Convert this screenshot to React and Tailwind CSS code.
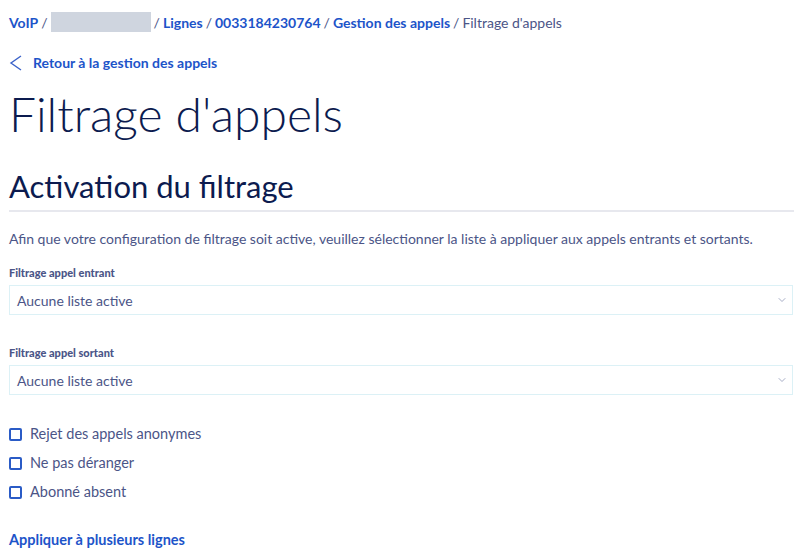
import { ChevronDown } from "lucide-react"

const Crumb = ({ children }) => (
  <a href="#" className="font-bold text-[#1d54c9] hover:underline">
    {children}
  </a>
)

const Sep = () => <span className="mx-[3px] text-[#4b5587]">/</span>

const FilterSelect = ({ label }) => (
  <div>
    <label className="block text-[11px] leading-[14px] font-black text-[#4b5587] mb-[5px]">{label}</label>
    <div className="relative h-[30px] border border-[#dcf1f6] flex items-center px-[7px] text-[14px] text-[#4b5587]">
      Aucune liste active
      <ChevronDown className="absolute right-[4px] w-[12px] h-[12px] text-[#8a91b3]" strokeWidth={1.5} />
    </div>
  </div>
)

const Check = ({ label }) => (
  <label className="flex items-center gap-[8px] h-[22px] text-[14.5px] text-[#4b5587]">
    <span className="w-[13px] h-[13px] border-2 border-[#2a5bc6] rounded-[2px] bg-white"></span>
    {label}
  </label>
)

export default function App() {
  return (
    <div className="min-h-[555px] bg-white px-[9px] pt-[12px] font-['Lato',sans-serif]">
      <nav className="flex items-center text-[14px] h-[20px]">
        <Crumb>VoIP</Crumb>
        <Sep />
        <span className="w-[100px] h-[20px] bg-[#cfd5df]"></span>
        <Sep />
        <Crumb>Lignes</Crumb>
        <Sep />
        <Crumb>0033184230764</Crumb>
        <Sep />
        <Crumb>Gestion des appels</Crumb>
        <Sep />
        <span className="text-[#4b5587]">Filtrage d'appels</span>
      </nav>

      <a href="#" className="mt-[20px] flex items-center gap-[10px] text-[14px] font-bold text-[#1d54c9]">
        <svg width="14" height="16" viewBox="0 0 14 16" fill="none" stroke="#3b62c9" strokeWidth="1.4">
          <path d="M12 1 L2 8 L12 15" />
        </svg>
        Retour à la gestion des appels
      </a>

      <h1 className="mt-[13px] text-[48px] font-light leading-[56px] text-[#0c1b4f]">Filtrage d'appels</h1>

      <h2 className="mt-[24px] text-[31px] leading-[40px] text-[#0c1b4f]">Activation du filtrage</h2>
      <div className="mt-[4px] mr-[2px] h-[2px] bg-[#e7e8ee]"></div>

      <p className="mt-[17px] text-[14px] leading-[20px] text-[#4b5587]">
        Afin que votre configuration de filtrage soit active, veuillez sélectionner la liste à appliquer aux appels entrants et sortants.
      </p>

      <div className="mt-[17px] mr-[3px] flex flex-col gap-[31px]">
        <FilterSelect label="Filtrage appel entrant" />
        <FilterSelect label="Filtrage appel sortant" />
      </div>

      <div className="mt-[28px] flex flex-col gap-[7px]">
        <Check label="Rejet des appels anonymes" />
        <Check label="Ne pas déranger" />
        <Check label="Abonné absent" />
      </div>

      <a href="#" className="block mt-[26px] text-[14.5px] font-bold text-[#1d54c9]">Appliquer à plusieurs lignes</a>
    </div>
  )
}
